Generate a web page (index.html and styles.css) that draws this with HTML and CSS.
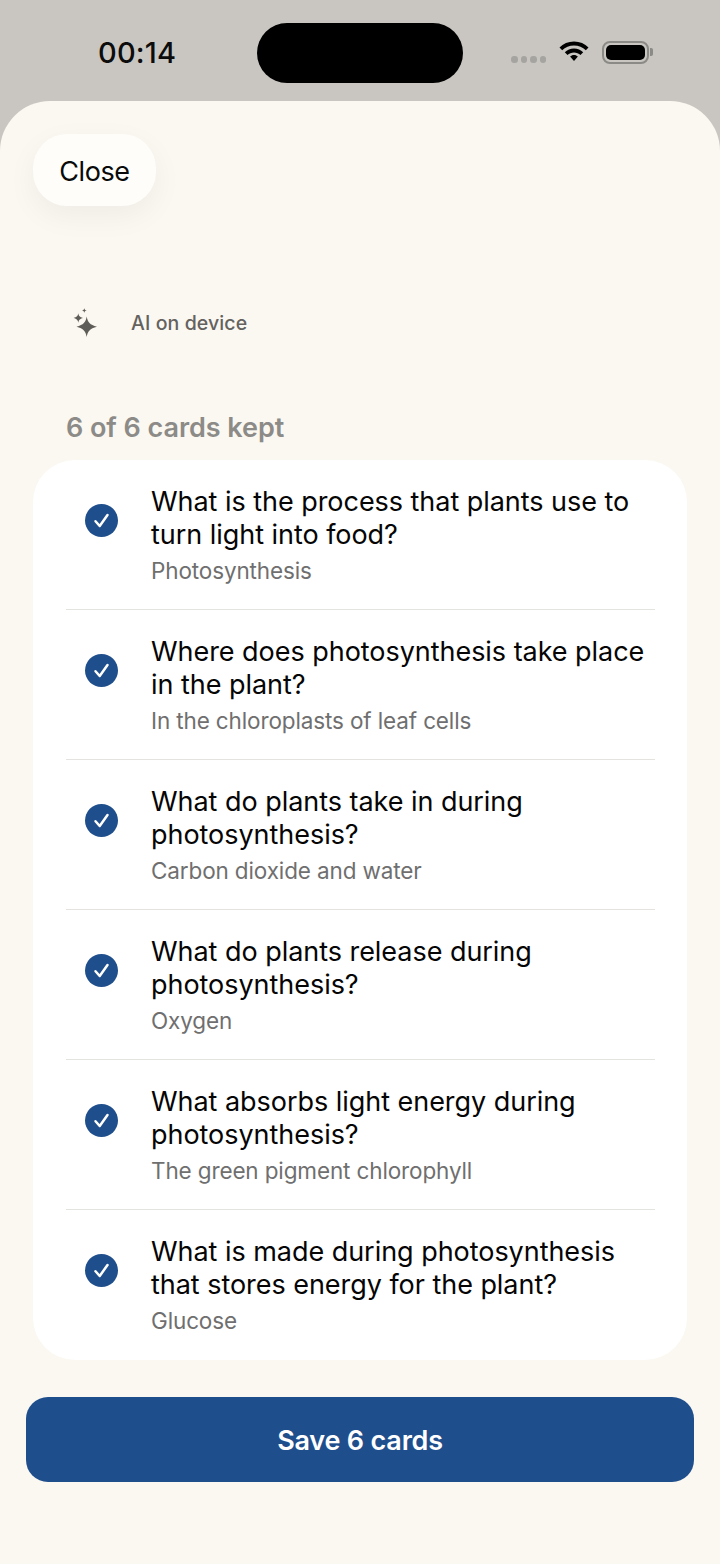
FILE: index.html
```html
<!DOCTYPE html>
<html lang="en">
<head>
<meta charset="utf-8">
<title>Cards</title>
<link rel="stylesheet" href="styles.css">
</head>
<body>
<div class="status">
  <span class="time">00:14</span>
  <div class="island"></div>
  <div class="status-right">
    <div class="dots"><i></i><i></i><i></i><i></i></div>
    <svg class="wifi" width="32" height="24" viewBox="0 0 32 24"><path d="M16 2.500C10.200 2.500 5.200 4.800 1.500 8.400L4.200 11.200C7.200 8.300 11.400 6.500 16 6.500S24.800 8.300 27.800 11.200L30.500 8.400C26.800 4.800 21.800 2.500 16 2.500Z"/><path d="M16 9.500C12.400 9.500 9.200 10.900 6.800 13.200L9.500 16C11.200 14.400 13.500 13.400 16 13.400S20.800 14.400 22.500 16L25.200 13.200C22.800 10.900 19.600 9.500 16 9.500Z"/><path d="M16 16C14.500 16 13.100 16.600 12.100 17.500L16 22L19.900 17.500C18.900 16.600 17.500 16 16 16Z"/></svg>
    <div class="battery"><div class="battery-fill"></div></div>
    <div class="battery-cap"></div>
  </div>
</div>
<main class="sheet">
  <button class="close">Close</button>
  <div class="ai">
    <svg class="spark" width="28" height="30" viewBox="0 0 28 30"><path d="M14.700 9.500C15.700 15.300 17.800 17.800 25 19.700C17.800 21.600 15.700 24.100 14.700 30C13.700 24.100 11.600 21.600 4.500 19.700C11.600 17.800 13.700 15.300 14.700 9.500Z"/><path d="M6.300 6.300C6.800 9 7.700 10.100 11 11C7.700 11.900 6.800 13 6.300 15.700C5.800 13 4.900 11.900 1.600 11C4.900 10.100 5.800 9 6.300 6.300Z"/><path d="M12.300 1C12.500 2.600 13 3.200 14.800 3.500C13 3.800 12.500 4.400 12.300 6C12.100 4.400 11.600 3.800 9.800 3.500C11.600 3.200 12.100 2.600 12.300 1Z"/></svg>
    <span class="ai-text">AI on device</span>
  </div>
  <h2 class="kept">6 of 6 cards kept</h2>
  <section class="card">
    <div class="row"><svg class="check" viewBox="0 0 33 33"><circle cx="16.500" cy="16.500" r="16.500"/><path d="M10.500 17.200L14.700 22L22.500 11"/></svg><div class="txt"><p class="q">What is the process that plants use to turn light into food?</p><p class="a">Photosynthesis</p></div></div>
    <div class="row"><svg class="check" viewBox="0 0 33 33"><circle cx="16.500" cy="16.500" r="16.500"/><path d="M10.500 17.200L14.700 22L22.500 11"/></svg><div class="txt"><p class="q">Where does photosynthesis take place in the plant?</p><p class="a">In the chloroplasts of leaf cells</p></div></div>
    <div class="row"><svg class="check" viewBox="0 0 33 33"><circle cx="16.500" cy="16.500" r="16.500"/><path d="M10.500 17.200L14.700 22L22.500 11"/></svg><div class="txt"><p class="q">What do plants take in during photosynthesis?</p><p class="a">Carbon dioxide and water</p></div></div>
    <div class="row"><svg class="check" viewBox="0 0 33 33"><circle cx="16.500" cy="16.500" r="16.500"/><path d="M10.500 17.200L14.700 22L22.500 11"/></svg><div class="txt"><p class="q">What do plants release during photosynthesis?</p><p class="a">Oxygen</p></div></div>
    <div class="row"><svg class="check" viewBox="0 0 33 33"><circle cx="16.500" cy="16.500" r="16.500"/><path d="M10.500 17.200L14.700 22L22.500 11"/></svg><div class="txt"><p class="q">What absorbs light energy during photosynthesis?</p><p class="a">The green pigment chlorophyll</p></div></div>
    <div class="row"><svg class="check" viewBox="0 0 33 33"><circle cx="16.500" cy="16.500" r="16.500"/><path d="M10.500 17.200L14.700 22L22.500 11"/></svg><div class="txt"><p class="q">What is made during photosynthesis that stores energy for the plant?</p><p class="a">Glucose</p></div></div>
  </section>
  <button class="save">Save 6 cards</button>
</main>
</body>
</html>
```
FILE: styles.css
```css
* { box-sizing: border-box; }
html, body { margin: 0; padding: 0; }
body {
  width: 720px;
  height: 1564px;
  overflow: hidden;
  background: #c9c6c1;
  font-family: Inter, "Liberation Sans", sans-serif;
  color: #000;
}
.status {
  height: 101px;
  display: flex;
  align-items: flex-start;
  padding-left: 98px;
}
.time {
  margin-top: 35px;
  font-size: 29px;
  line-height: 36px;
  font-weight: 500;
  letter-spacing: 0.2px;
  width: 159px;
  color: #0c0c0c;
}
.island {
  margin-top: 23px;
  width: 206px;
  height: 60px;
  border-radius: 30px;
  background: #000;
}
.status-right {
  display: flex;
  align-items: center;
  margin-left: 48px;
  margin-top: 39px;
  height: 26px;
}
.dots { display: flex; gap: 3px; margin-top: 15px; }
.dots i { width: 6.500px; height: 6.500px; border-radius: 50%; background: #a6a4a0; display: block; }
.wifi { margin-left: 12px; margin-top: -2px; display: block; }
.battery {
  margin-left: 12px;
  width: 47px;
  height: 23px;
  border: 2px solid #8b8a87;
  border-radius: 8px;
  padding: 2px;
}
.battery-fill { width: 100%; height: 100%; background: #000; border-radius: 5px; }
.battery-cap { width: 2.500px; height: 8px; background: #8b8a87; border-radius: 0 2px 2px 0; margin-left: 1px; }
.sheet {
  height: 1463px;
  background: #fbf8f1;
  border-radius: 50px 50px 0 0;
  padding: 33px 26px 0;
  display: flex;
  flex-direction: column;
  align-items: flex-start;
}
.close {
  margin-left: 7px;
  width: 123px;
  height: 72px;
  border: 0;
  border-radius: 34px;
  background: #fefdf9;
  box-shadow: 0 10px 30px rgba(0, 0, 0, 0.05);
  font: 400 27px Inter, "Liberation Sans", sans-serif;
  letter-spacing: -0.4px;
  color: #0a0a0a;
  padding: 2px 0 0;
}
.ai {
  margin-top: 101px;
  margin-left: 46px;
  display: flex;
  align-items: center;
  height: 30px;
}
.spark { fill: #5f5d58; display: block; }
.ai-text {
  margin-left: 31px;
  font-size: 19.500px;
  font-weight: 450;
  color: #64625e;
  letter-spacing: 0.1px;
  padding-top: 1px;
}
.kept {
  margin: 74px 0 0 40px;
  font-size: 27px;
  line-height: 34px;
  font-weight: 600;
  color: #8c8b88;
  letter-spacing: -0.05px;
}
.card {
  margin: 15px 0 0 7px;
  width: 654px;
  height: 900px;
  background: #fff;
  border-radius: 42px;
  padding: 0 32px 0 33px;
}
.row {
  height: 150px;
  display: flex;
  align-items: center;
  padding-top: 1px;
  border-bottom: 1px solid #e4e3e0;
}
.row:last-child { border-bottom-color: transparent; }
.check { width: 33px; height: 33px; margin: 0 0 30px 19px; flex: none; display: block; }
.check circle { fill: #1f4e8c; }
.check path { fill: none; stroke: #fff; stroke-width: 2.500; stroke-linecap: round; stroke-linejoin: round; }
.txt { margin-left: 33px; width: 505px; }
.q {
  margin: 0;
  font-size: 27px;
  line-height: 33px;
  font-weight: 400;
  letter-spacing: -0.04px;
  color: #050505;
}
.a {
  margin: 5px 0 0;
  font-size: 22.500px;
  line-height: 30px;
  letter-spacing: -0.13px;
  color: #6f6f6f;
}
.save {
  margin-top: 37px;
  width: 668px;
  height: 85px;
  border: 0;
  border-radius: 22px;
  background: #1f4e8c;
  color: #fff;
  font: 600 27px Inter, "Liberation Sans", sans-serif;
  letter-spacing: -0.2px;
  padding: 2px 0 0;
}
```
